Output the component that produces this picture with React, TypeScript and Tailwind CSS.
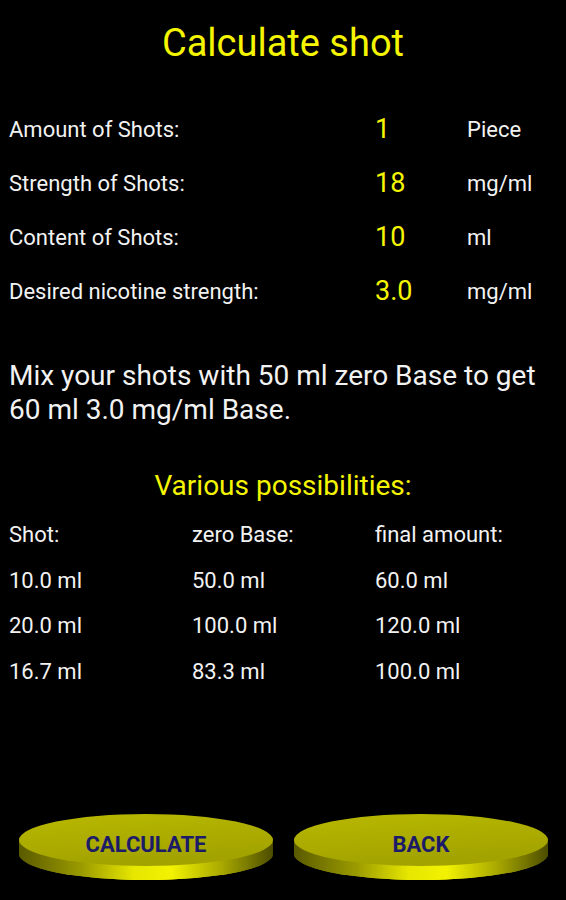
import React from "react";

const inputs = [
  { label: "Amount of Shots:", value: "1", unit: "Piece" },
  { label: "Strength of Shots:", value: "18", unit: "mg/ml" },
  { label: "Content of Shots:", value: "10", unit: "ml" },
  { label: "Desired nicotine strength:", value: "3.0", unit: "mg/ml" },
];

const table = [
  ["Shot:", "zero Base:", "final amount:"],
  ["10.0 ml", "50.0 ml", "60.0 ml"],
  ["20.0 ml", "100.0 ml", "120.0 ml"],
  ["16.7 ml", "83.3 ml", "100.0 ml"],
];

const DiscButton = ({ label, id }: { label: string; id: string }) => (
  <button className="relative w-[256px] h-[72px] flex items-center justify-center">
    <svg className="absolute inset-0" width="256" height="72" viewBox="0 0 256 72">
      <defs>
        <linearGradient id={`side-${id}`} x1="0" x2="1" y1="0" y2="0">
          <stop offset="0" stopColor="#5a5a00" />
          <stop offset="0.25" stopColor="#9c9c00" />
          <stop offset="0.45" stopColor="#e6e600" />
          <stop offset="0.6" stopColor="#f2f200" />
          <stop offset="0.8" stopColor="#a8a800" />
          <stop offset="1" stopColor="#4c4c00" />
        </linearGradient>
        <linearGradient id={`top-${id}`} x1="0" x2="0.3" y1="0" y2="1">
          <stop offset="0" stopColor="#b8b800" />
          <stop offset="1" stopColor="#a2a200" />
        </linearGradient>
      </defs>
      <path
        d="M1 30 L1 44 A127 26 0 0 0 255 44 L255 30 Z"
        fill={`url(#side-${id})`}
      />
      <ellipse cx="128" cy="44" rx="127" ry="26" fill={`url(#side-${id})`} />
      <ellipse cx="128" cy="30" rx="127" ry="26" fill={`url(#top-${id})`} />
    </svg>
    <span className="relative -mt-[4px] text-[22px] font-bold text-[#1b1b68]">
      {label}
    </span>
  </button>
);

export default function App() {
  return (
    <div className="min-h-[900px] w-[566px] bg-black flex flex-col font-['Roboto','Liberation_Sans',sans-serif] text-[#f2f2f2]">
      <h1 className="text-center text-[38px] text-[#f5f500] pt-[19px] leading-[48px]">
        Calculate shot
      </h1>

      <div className="mt-[43px] flex flex-col gap-[16px] pl-[9px]">
        {inputs.map((r) => (
          <div key={r.label} className="flex items-center h-[38px]">
            <span className="w-[366px] text-[22px]">{r.label}</span>
            <span className="w-[92px] text-[27px] text-[#f5f500]">{r.value}</span>
            <span className="text-[22px]">{r.unit}</span>
          </div>
        ))}
      </div>

      <p className="mt-[49px] px-[9px] text-[28px] leading-[34px]">
        Mix your shots with 50 ml zero Base to get 60 ml 3.0 mg/ml Base.
      </p>

      <h2 className="mt-[42px] text-center text-[28px] text-[#f5f500] leading-[34px]">
        Various possibilities:
      </h2>

      <div className="mt-[20px] flex flex-col gap-[21px] pl-[9px]">
        {table.map((row, i) => (
          <div key={i} className="grid grid-cols-[183px_183px_1fr] text-[22px] leading-[24.5px]">
            {row.map((c) => (
              <span key={c}>{c}</span>
            ))}
          </div>
        ))}
      </div>

      <div className="mt-auto mb-[18px] flex justify-between pl-[18px] pr-[17px]">
        <DiscButton id="calc" label="CALCULATE" />
        <DiscButton id="back" label="BACK" />
      </div>
    </div>
  );
}
